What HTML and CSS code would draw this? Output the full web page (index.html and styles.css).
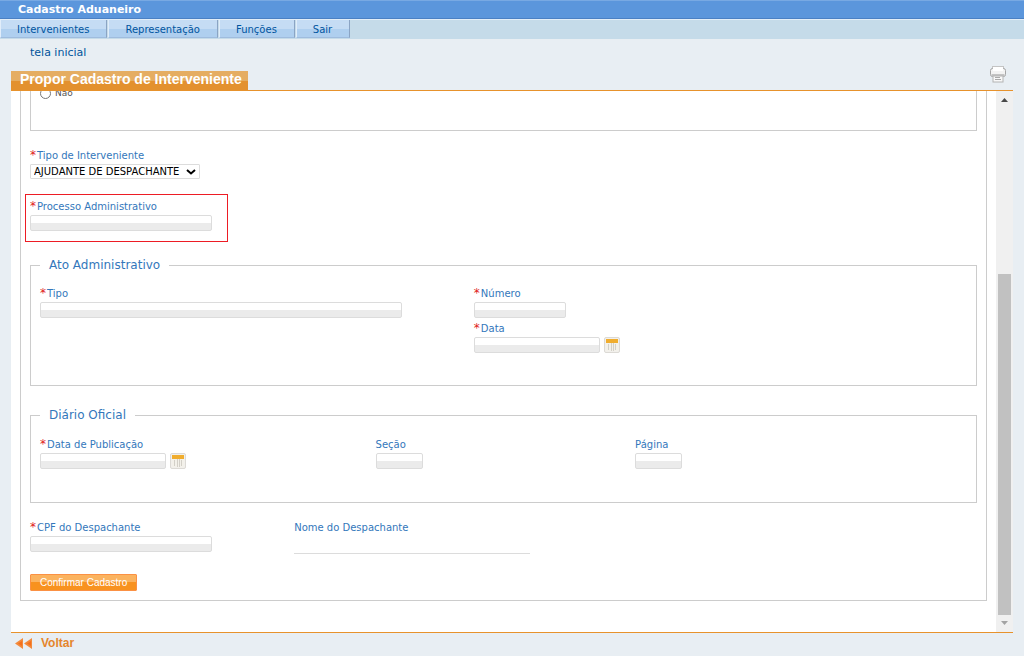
FILE: index.html
```html
<!DOCTYPE html>
<html lang="pt-BR">
<head>
<meta charset="utf-8">
<title>Cadastro Aduaneiro</title>
<link rel="stylesheet" href="styles.css">
</head>
<body>
<header class="app-title">Cadastro Aduaneiro</header>
<nav class="menu">
  <a class="menu-item" href="#">Intervenientes</a>
  <a class="menu-item" href="#">Representação</a>
  <a class="menu-item" href="#">Funções</a>
  <a class="menu-item" href="#">Sair</a>
</nav>
<a class="crumb" href="#">tela inicial</a>
<div class="heading">
  <h1 class="tab">Propor Cadastro de Interveniente</h1>
  <button class="print" type="button" aria-label="Imprimir">
    <svg width="16" height="17" viewBox="0 0 16 17">
      <rect x="2.500" y=".5" width="11" height="5" fill="#fff" stroke="#c4c4c4"/>
      <rect x=".5" y="2.500" width="15" height="8" rx="2" fill="#f3f3f3" stroke="#a5a5a5"/>
      <path d="M3 3.500h10" stroke="#fff" stroke-width="3"/>
      <path d="M1.500 9h13" stroke="#c4c4c4" stroke-width="2"/>
      <rect x="3" y="10" width="10" height="6" fill="#f8f8f8" stroke="#b4b4b4"/>
      <path d="M5 11.500h5M5 13.500h6" stroke="#aaa"/>
    </svg>
  </button>
</div>
<main class="pane">
  <div class="viewport">
    <form class="form">
      <fieldset class="group group-choice">
        <label class="choice"><input type="radio" name="opcao"> Não</label>
      </fieldset>
      <div class="field field-type">
        <label for="tipo-int"><span class="req">*</span>Tipo de Interveniente</label>
        <span class="select-wrap">
          <select id="tipo-int"><option>AJUDANTE DE DESPACHANTE</option></select>
          <svg class="chevron" width="10" height="6" viewBox="0 0 10 6"><path d="M1 1l4 3.500L9 1" fill="none" stroke="#000" stroke-width="2"/></svg>
        </span>
      </div>
      <div class="highlight">
        <div class="field">
          <label for="processo"><span class="req">*</span>Processo Administrativo</label>
          <input class="box w-long" id="processo" type="text">
        </div>
      </div>
      <fieldset class="group group-ato">
        <legend>Ato Administrativo</legend>
        <div class="cols cols-ato">
          <div class="field">
            <label for="tipo"><span class="req">*</span>Tipo</label>
            <input class="box w-wide" id="tipo" type="text">
          </div>
          <div class="stack">
            <div class="field">
              <label for="numero"><span class="req">*</span>Número</label>
              <input class="box w-number" id="numero" type="text">
            </div>
            <div class="field">
              <label for="data"><span class="req">*</span>Data</label>
              <div class="date">
                <input class="box w-date" id="data" type="text">
                <button class="cal" type="button" aria-label="Calendário"><svg width="12" height="12" viewBox="0 0 12 12"><path fill="#f0ad2e" d="M0 0h12v4H0z"/><path fill="#f3f1ea" d="M0 4h12v8H0z"/><path d="M2.500 5v6M5.500 4v8M7.500 4v8M9.500 5v6" stroke="#d3d0c8"/></svg></button>
              </div>
            </div>
          </div>
        </div>
      </fieldset>
      <fieldset class="group group-diario">
        <legend>Diário Oficial</legend>
        <div class="cols cols-diario">
          <div class="field">
            <label for="publicacao"><span class="req">*</span>Data de Publicação</label>
            <div class="date">
              <input class="box w-date" id="publicacao" type="text">
              <button class="cal" type="button" aria-label="Calendário"><svg width="12" height="12" viewBox="0 0 12 12"><path fill="#f0ad2e" d="M0 0h12v4H0z"/><path fill="#f3f1ea" d="M0 4h12v8H0z"/><path d="M2.500 5v6M5.500 4v8M7.500 4v8M9.500 5v6" stroke="#d3d0c8"/></svg></button>
            </div>
          </div>
          <div class="field">
            <label for="secao">Seção</label>
            <input class="box w-short" id="secao" type="text">
          </div>
          <div class="field">
            <label for="pagina">Página</label>
            <input class="box w-short" id="pagina" type="text">
          </div>
        </div>
      </fieldset>
      <div class="cols cols-despachante">
        <div class="field">
          <label for="cpf"><span class="req">*</span>CPF do Despachante</label>
          <input class="box w-long" id="cpf" type="text">
        </div>
        <div class="field">
          <label for="nome">Nome do Despachante</label>
          <input class="line" id="nome" type="text" readonly>
        </div>
      </div>
      <button class="confirm" type="submit">Confirmar Cadastro</button>
    </form>
  </div>
  <div class="scrollbar" aria-hidden="true">
    <svg class="arrow" width="17" height="17" viewBox="0 0 17 17"><path d="M5 11h7L8.500 7z" fill="#484848"/></svg>
    <div class="track"><div class="thumb"></div></div>
    <svg class="arrow" width="17" height="17" viewBox="0 0 17 17"><path d="M5 6h7L8.500 10z" fill="#a3a3a3"/></svg>
  </div>
</main>
<footer class="footer">
  <a class="back" href="#">
    <svg width="17" height="11" viewBox="0 0 17 11"><path d="M8 0v11L0 5.500zM17 0v11L9 5.500z" fill="#f28a3c"/><path d="M7 3v5L3 5.500zM16 3v5l-4-2.500z" fill="#f56f1c"/></svg>
    Voltar
  </a>
</footer>
</body>
</html>
```

FILE: styles.css
```css
* { box-sizing: border-box; }
body {
  margin: 0;
  height: 100vh;
  display: flex;
  flex-direction: column;
  background: #e8eef3;
  font-family: Verdana, "DejaVu Sans", sans-serif;
  font-size: 10px;
  color: #3377bb;
}
a { color: inherit; text-decoration: none; }
.app-title {
  height: 19px;
  padding-left: 18px;
  border-top: 1px solid #78a9e3;
  border-bottom: 1px solid #4a80c4;
  background: #5b96dc;
  color: #fff;
  font-size: 11px;
  font-weight: bold;
  line-height: 17px;
}
.menu {
  display: flex;
  gap: 1px;
  height: 20px;
  padding-bottom: 1px;
  background: #c5dbe9;
  border-top: 1px solid #e1edf8;
}
.menu-item {
  padding: 1px 17px 0 16px;
  border-left: 1px solid #e1edfa;
  border-right: 1px solid #8ba4c4;
  border-bottom: 1px solid #9fbcde;
  background: linear-gradient(#c5dcf4 50%, #afcfef 50%);
  color: #0055a0;
  line-height: 17px;
}
.crumb {
  align-self: flex-start;
  margin: 6px 0 10px 30px;
  color: #00549b;
  font-size: 11px;
  line-height: 16px;
}
.heading {
  display: flex;
  justify-content: space-between;
  align-items: flex-start;
  height: 20px;
  margin: 0 11px;
  border-bottom: 1px solid #e7922c;
}
.tab {
  margin: 0;
  padding: 0 6px 0 9px;
  height: 19px;
  background: linear-gradient(#e5ad62 55%, #e3912f 55%);
  color: #fff;
  font: bold 14px/17px Arial, "Liberation Sans", sans-serif;
}
.print {
  display: flex;
  margin: -5px 7px 0 0;
  padding: 0;
  border: 0;
  background: none;
}
.pane {
  flex: 1;
  min-height: 0;
  display: flex;
  margin: 0 11px;
  background: #fff;
}
.viewport {
  flex: 1;
  min-width: 0;
  display: flex;
  flex-direction: column;
  justify-content: flex-end;
  overflow: hidden;
  padding: 0 9px 31px;
}
.form {
  flex: none;
  padding: 9px;
  border: 1px solid #ccc;
}
.group {
  min-width: 0;
  margin: 0;
  padding: 14px 9px 32px;
  border: 1px solid #ccc;
}
.group-choice { margin-bottom: 18px; padding: 20px 9px 30px; }
.choice { display: flex; align-items: center; gap: 4px; height: 14px; color: #555; font-size: 9px; }
.choice input { width: 11px; height: 11px; margin: 0; }
legend { padding: 0 9px; font-size: 12px; line-height: 16px; }
.field { display: flex; flex-direction: column; align-items: flex-start; gap: 1px; }
.field label { height: 14px; line-height: 14px; }
.req { margin-right: 1px; color: #e02020; font-size: 12px; line-height: 12px; }
.select-wrap { display: grid; align-items: center; }
.select-wrap > * { grid-area: 1 / 1; }
.select-wrap select {
  width: 170px;
  height: 15px;
  padding: 0 3px;
  border: 1px solid #dcdcdc;
  border-radius: 1px;
  appearance: none;
  background: #fff;
  color: #000;
  font: 10px Verdana, "DejaVu Sans", sans-serif;
}
.chevron { justify-self: end; margin-right: 4px; pointer-events: none; }
.highlight {
  width: 203px;
  margin: 15px 0 15px -5px;
  padding: 5px 4px 10px;
  border: 1px solid #ed1c24;
}
.box {
  height: 16px;
  padding: 0 3px;
  border: 1px solid #dcdcdc;
  border-radius: 2px;
  background: linear-gradient(#fff 50%, #ebebeb 50%);
  font: inherit;
}
.w-long { width: 182px; }
.w-wide { width: 362px; }
.w-number { width: 92px; }
.w-date { width: 126px; }
.w-short { width: 47px; }
.line {
  width: 236px;
  height: 18px;
  padding: 0;
  border: 0;
  border-bottom: 1px solid #dcdcdc;
  background: none;
  font: inherit;
}
.date { display: flex; align-items: center; gap: 4px; }
.cal {
  display: flex;
  justify-content: center;
  padding: 1px;
  border: 1px solid #dcdad5;
  border-radius: 2px;
  background: #f2f0ec;
}
.stack { display: flex; flex-direction: column; gap: 4px; }
.cols { display: grid; align-items: start; }
.cols-ato { grid-template-columns: 46.8% 1fr; }
.cols-diario { grid-template-columns: 36.2% 28% 1fr; }
.cols-despachante { grid-template-columns: 27.9% 1fr; margin: 18px 0 20px; }
.group-diario { margin-top: 21px; padding: 15px 9px 33px; }
.confirm {
  display: block;
  height: 17px;
  padding: 0 9px;
  border: 1px solid #fb9144;
  border-radius: 1px;
  background: linear-gradient(#fbb35f 50%, #f8921f 50%);
  color: #fff;
  font: 10px/15px Arial, "Liberation Sans", sans-serif;
}
.scrollbar { display: flex; flex-direction: column; width: 17px; background: #f0f0f0; }
.arrow { display: block; flex: none; }
.track { flex: 1; display: flex; flex-direction: column; justify-content: flex-end; padding: 0 2px; }
.thumb { height: 67.300%; background: #c1c1c1; }
.footer { height: 24px; margin: 0 11px; border-top: 1px solid #e7922c; }
.back {
  display: inline-flex;
  align-items: center;
  gap: 9px;
  padding-left: 4px;
  color: #e5852c;
  font: bold 12px/20px Arial, "Liberation Sans", sans-serif;
}
```
